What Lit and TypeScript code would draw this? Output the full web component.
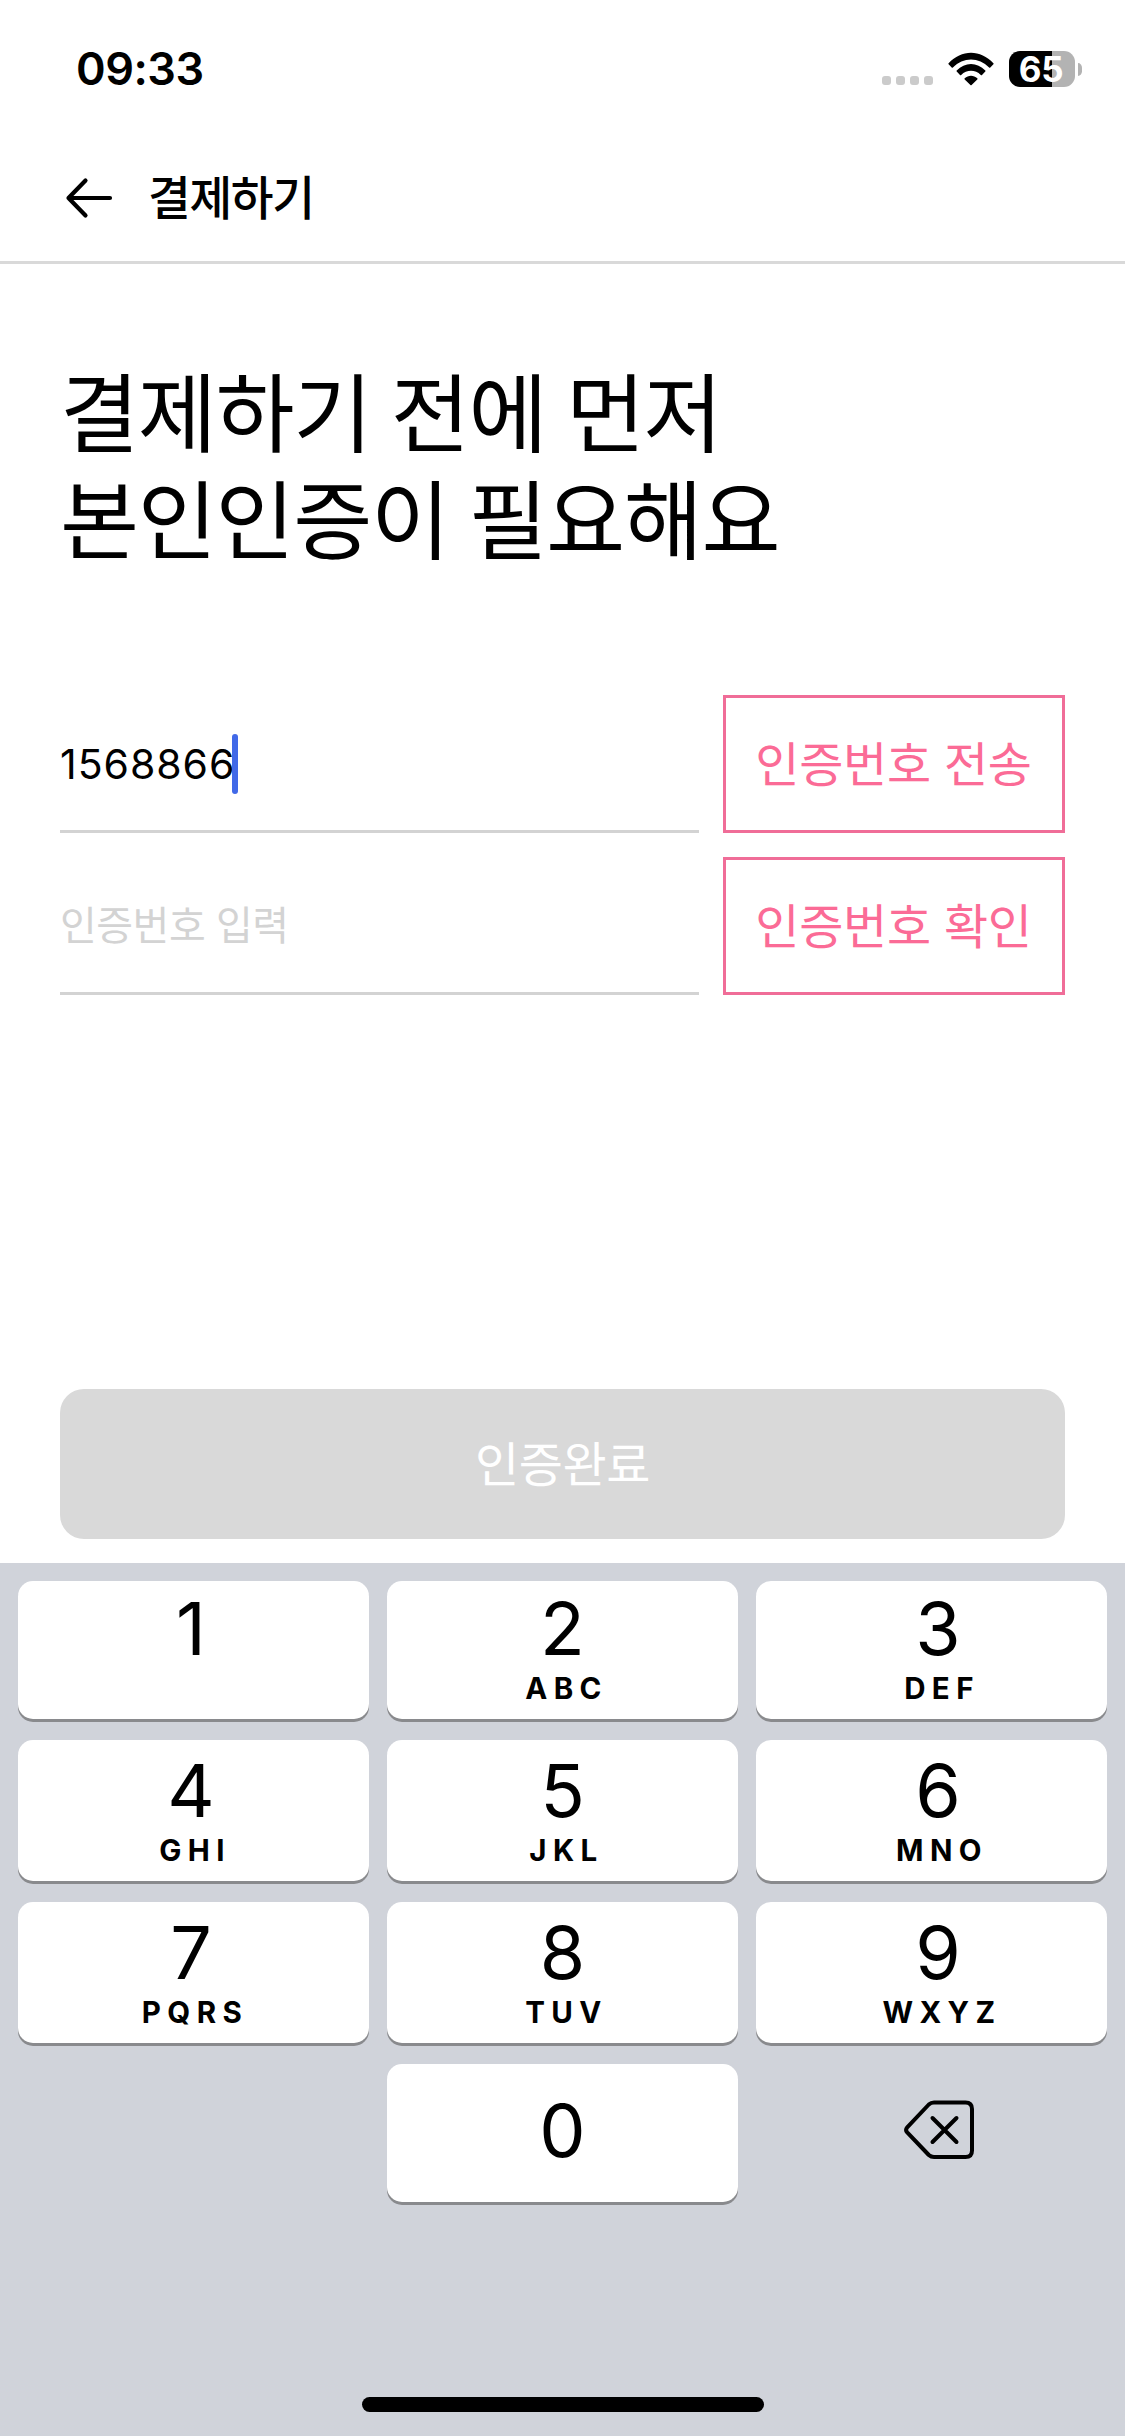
import { LitElement, html, css, nothing } from "lit";
import { customElement, property } from "lit/decorators.js";

const KEYS = [
  ["1", ""], ["2", "ABC"], ["3", "DEF"],
  ["4", "GHI"], ["5", "JKL"], ["6", "MNO"],
  ["7", "PQRS"], ["8", "TUV"], ["9", "WXYZ"],
];

@customElement("status-bar")
class StatusBar extends LitElement {
  static styles = css`
    :host { display: flex; justify-content: space-between; box-sizing: border-box; height: 138px; padding: 51px 43px 0 76px; }
    .time { font-size: 45px; font-weight: 600; line-height: 36px; letter-spacing: -0.5px; }
    .icons { display: flex; height: 36px; }
    .dots { display: flex; gap: 5px; margin: 25px 15px 0 0; }
    .dot { width: 9px; height: 9px; border-radius: 3px; background: #cbcbcb; }
    .wifi { width: 46px; height: 34px; margin: 1px 15px 0 0; }
    .battery { box-sizing: border-box; width: 66px; height: 36px; padding-right: 2px; border-radius: 11px; background: linear-gradient(90deg, #000 43px, #b3b3b3 43px); color: #fff; font-size: 35px; font-weight: 650; line-height: 37px; text-align: center; letter-spacing: -0.2px; }
    .nub { width: 4px; height: 13px; margin: 12px 0 0 3px; border-radius: 0 5px 5px 0 / 0 6px 6px 0; background: #b3b3b3; }
  `;
  render() {
    return html`
      <div class="time">09:33</div>
      <div class="icons">
        <div class="dots">${[0, 1, 2, 3].map(() => html`<span class="dot"></span>`)}</div>
        <svg class="wifi" viewBox="0 0 46 34">
          <path d="M.6 11.2C13.3-2.9 32.7-2.9 45.4 11.2Q45.9 11.8 45.4 12.3L42.3 15.4Q41.700 16 41.100 15.4C30.900 4.700 15.100 4.700 4.900 15.400Q4.300 16 3.700 15.400L.6 12.300Q.1 11.800.6 11.200Z"/>
          <path d="M8.700 18.500C16.800 9.800 29.200 9.800 37.300 18.500Q37.800 19.100 37.300 19.600L34 22.900Q33.400 23.500 32.800 22.900C27.300 17.400 18.700 17.400 13.200 22.900Q12.600 23.500 12 22.900L8.700 19.600Q8.200 19.100 8.700 18.500Z"/>
          <path d="M16.700 26.200C20.300 22.800 25.700 22.800 29.300 26.200Q29.900 26.800 29.300 27.400L23.600 33Q23 33.600 22.400 33L16.700 27.400Q16.100 26.800 16.700 26.200Z"/>
        </svg>
        <div class="battery">65</div>
        <div class="nub"></div>
      </div>`;
  }
}

@customElement("code-row")
class CodeRow extends LitElement {
  @property() value = "";
  @property() placeholder = "";
  @property() action = "";
  static styles = css`
    :host { display: flex; gap: 24px; height: 138px; }
    .field { display: flex; align-items: center; box-sizing: border-box; width: 639px; padding-top: 2px; border-bottom: 3px solid #d3d3d3; }
    .value { font-size: 41px; line-height: 60px; letter-spacing: 0.95px; }
    .caret { width: 6px; height: 60px; margin-left: -3px; border-radius: 3px; background: #4169e8; }
    .hint { font-size: 40px; line-height: 60px; letter-spacing: -0.5px; color: #d3d3d3; }
    .action { display: flex; align-items: center; justify-content: center; box-sizing: border-box; width: 342px; padding: 1px 1px 0 0; border: 3px solid #f06d98; color: #fb6b96; font-size: 48px; line-height: 60px; letter-spacing: -0.3px; white-space: nowrap; }
  `;
  render() {
    return html`
      <div class="field">
        ${this.value
          ? html`<span class="value">${this.value}</span><span class="caret"></span>`
          : html`<span class="hint">${this.placeholder}</span>`}
      </div>
      <div class="action">${this.action}</div>`;
  }
}

@customElement("number-pad")
class NumberPad extends LitElement {
  static styles = css`
    :host { display: block; box-sizing: border-box; height: 873px; padding: 18px; background: #d0d3da; }
    .grid { display: grid; grid-template-columns: repeat(3, 351px); grid-template-rows: 138px 141px 141px 138px; gap: 21px 18px; }
    .key { display: flex; flex-direction: column; align-items: center; box-sizing: border-box; padding-top: 18px; border-radius: 15px; background: #fff; box-shadow: 0 3px 0 #898a8d; }
    .key:nth-child(n + 4) { padding-top: 21px; }
    .key:nth-child(3n + 1) { padding-right: 5px; }
    .key:nth-child(3n) { padding-left: 13px; }
    .zero { grid-column: 2; justify-content: center; }
    .key.zero { padding: 0 0 4px; }
    .digit { font-size: 73.5px; line-height: 60px; }
    .letters { margin-top: 11px; font-size: 29.5px; font-weight: 700; line-height: 36px; letter-spacing: 6.4px; padding-left: 8px; }
    .erase { display: flex; align-items: center; justify-content: center; padding: 0 0 6px 14px; }
    .erase svg { width: 72px; height: 62px; }
    .home { width: 402px; height: 15px; margin: 195px auto 0; border-radius: 8px; background: #000; }
  `;
  render() {
    return html`
      <div class="grid">
        ${KEYS.map(([digit, letters]) => html`
          <div class="key">
            <span class="digit">${digit}</span>
            ${letters ? html`<span class="letters">${letters}</span>` : nothing}
          </div>`)}
        <div class="key zero"><span class="digit">0</span></div>
        <div class="erase">
          <svg viewBox="0 0 72 62" fill="none" stroke="#000" stroke-width="4" stroke-linecap="round" stroke-linejoin="round">
            <path d="M31 3.500H62.500Q69 3.500 69 10V51.500Q69 58 62.500 58H31Q28 58 25.800 56L4.200 33.400Q2 30.900 4.200 28.400L25.800 5.500Q28 3.500 31 3.500Z"/>
            <path d="M29.500 19L53.500 43M53.500 19L29.500 43"/>
          </svg>
        </div>
      </div>
      <div class="home"></div>`;
  }
}

@customElement("app-root")
class AppRoot extends LitElement {
  static styles = css`
    :host { display: flex; flex-direction: column; width: 1125px; height: 2436px; background: #fff; color: #000; font-family: Inter, "Noto Sans CJK KR", sans-serif; overflow: hidden; }
    .header { display: flex; align-items: center; box-sizing: border-box; height: 126px; padding: 0 0 4px 64px; border-bottom: 3px solid #d9d9d9; }
    .back { width: 50px; height: 42px; margin-right: 34px; }
    .title { font-size: 46.5px; font-weight: 500; line-height: 60px; letter-spacing: -1.4px; }
    .content { display: flex; flex-direction: column; flex: 1; padding: 98px 60px 24px; }
    .heading { margin: 0; font-size: 86px; font-weight: 400; line-height: 107px; letter-spacing: -1.4px; word-spacing: -3px; }
    .form { display: flex; flex-direction: column; gap: 24px; margin-top: 119px; }
    .submit { display: flex; align-items: center; justify-content: center; box-sizing: border-box; height: 150px; margin-top: auto; padding-top: 2px; border-radius: 24px; background: #d9d9d9; color: #fff; font-size: 48px; line-height: 60px; letter-spacing: -0.4px; }
  `;
  render() {
    return html`
      <status-bar></status-bar>
      <div class="header">
        <svg class="back" viewBox="0 0 50 42" fill="none" stroke="#000" stroke-width="4.2" stroke-linecap="round" stroke-linejoin="round">
          <path d="M46 21H4.500M21.500 3.500L4.500 21L21.500 38.500"/>
        </svg>
        <span class="title">결제하기</span>
      </div>
      <div class="content">
        <h1 class="heading">결제하기 전에 먼저<br />본인인증이 필요해요</h1>
        <div class="form">
          <code-row value="1568866" action="인증번호 전송"></code-row>
          <code-row placeholder="인증번호 입력" action="인증번호 확인"></code-row>
        </div>
        <div class="submit">인증완료</div>
      </div>
      <number-pad></number-pad>`;
  }
}
